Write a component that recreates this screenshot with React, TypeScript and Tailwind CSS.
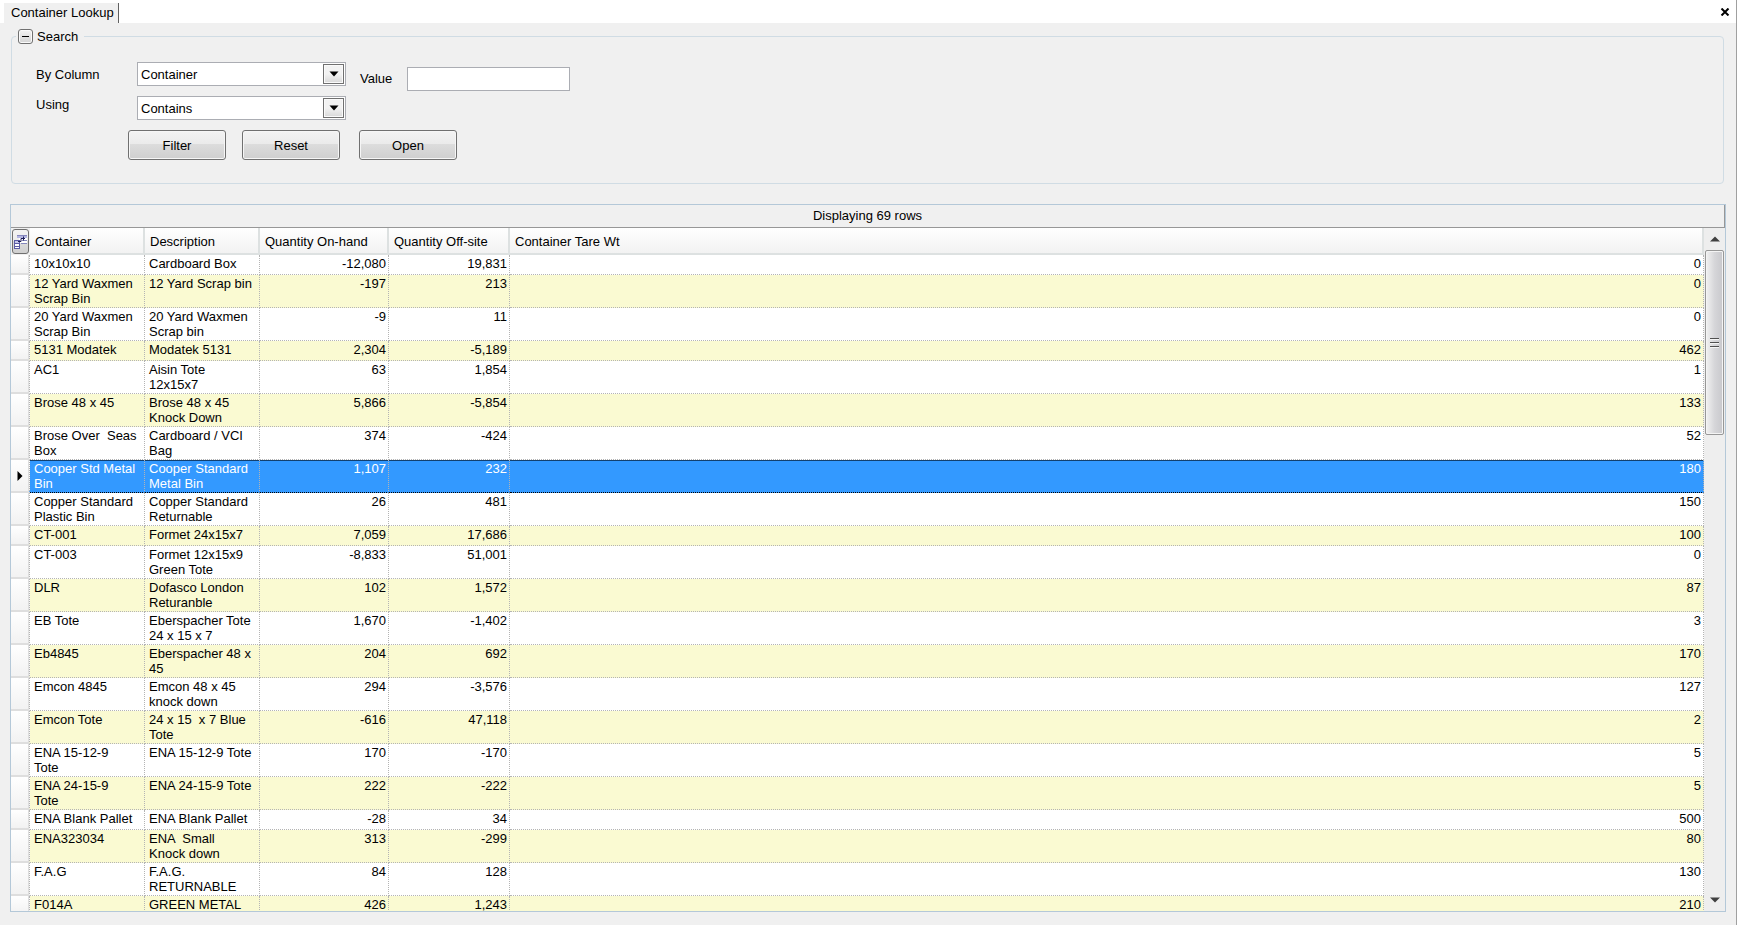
import React, { useState } from 'react';
import { clsx } from 'clsx';

interface ContainerRow {
  container: string;
  description: string;
  onHand: number;
  offSite: number;
  tare: number;
}

const rows: ContainerRow[] = [
  { container: '10x10x10', description: 'Cardboard Box', onHand: -12080, offSite: 19831, tare: 0 },
  { container: '12 Yard Waxmen\nScrap Bin', description: '12 Yard Scrap bin', onHand: -197, offSite: 213, tare: 0 },
  { container: '20 Yard Waxmen\nScrap Bin', description: '20 Yard Waxmen\nScrap bin', onHand: -9, offSite: 11, tare: 0 },
  { container: '5131 Modatek', description: 'Modatek 5131', onHand: 2304, offSite: -5189, tare: 462 },
  { container: 'AC1', description: 'Aisin Tote\n12x15x7', onHand: 63, offSite: 1854, tare: 1 },
  { container: 'Brose 48 x 45', description: 'Brose 48 x 45\nKnock Down', onHand: 5866, offSite: -5854, tare: 133 },
  { container: 'Brose Over  Seas\nBox', description: 'Cardboard / VCI\nBag', onHand: 374, offSite: -424, tare: 52 },
  { container: 'Cooper Std Metal\nBin', description: 'Cooper Standard\nMetal Bin', onHand: 1107, offSite: 232, tare: 180 },
  { container: 'Copper Standard\nPlastic Bin', description: 'Copper Standard\nReturnable', onHand: 26, offSite: 481, tare: 150 },
  { container: 'CT-001', description: 'Formet 24x15x7', onHand: 7059, offSite: 17686, tare: 100 },
  { container: 'CT-003', description: 'Formet 12x15x9\nGreen Tote', onHand: -8833, offSite: 51001, tare: 0 },
  { container: 'DLR', description: 'Dofasco London\nReturanble', onHand: 102, offSite: 1572, tare: 87 },
  { container: 'EB Tote', description: 'Eberspacher Tote\n24 x 15 x 7', onHand: 1670, offSite: -1402, tare: 3 },
  { container: 'Eb4845', description: 'Eberspacher 48 x\n45', onHand: 204, offSite: 692, tare: 170 },
  { container: 'Emcon 4845', description: 'Emcon 48 x 45\nknock down', onHand: 294, offSite: -3576, tare: 127 },
  { container: 'Emcon Tote', description: '24 x 15  x 7 Blue\nTote', onHand: -616, offSite: 47118, tare: 2 },
  { container: 'ENA 15-12-9\nTote', description: 'ENA 15-12-9 Tote', onHand: 170, offSite: -170, tare: 5 },
  { container: 'ENA 24-15-9\nTote', description: 'ENA 24-15-9 Tote', onHand: 222, offSite: -222, tare: 5 },
  { container: 'ENA Blank Pallet', description: 'ENA Blank Pallet', onHand: -28, offSite: 34, tare: 500 },
  { container: 'ENA323034', description: 'ENA  Small\nKnock down', onHand: 313, offSite: -299, tare: 80 },
  { container: 'F.A.G', description: 'F.A.G.\nRETURNABLE', onHand: 84, offSite: 128, tare: 130 },
  { container: 'F014A', description: 'GREEN METAL', onHand: 426, offSite: 1243, tare: 210 },
];

const headers = ['Container', 'Description', 'Quantity On-hand', 'Quantity Off-site', 'Container Tare Wt'];

const SelectBox = ({ id, options }: { id: string; options: string[] }) => (
  <div className="relative h-6 w-[209px]">
    <select
      id={id}
      className="h-full w-full appearance-none rounded-none border border-[#abadb3] bg-white pl-[3px] pr-6 text-black outline-none"
    >
      {options.map((o) => (
        <option key={o}>{o}</option>
      ))}
    </select>
    <span className="pointer-events-none absolute inset-y-[2px] right-[2px] flex w-[21px] items-center justify-center border border-[#707070] bg-linear-to-b from-[#f2f2f2] from-50% to-[#d8d8d8] shadow-[inset_0_0_0_1px_#fafafa]">
      <svg width="10" height="6" viewBox="0 0 10 6" aria-hidden="true">
        <path d="M0.5 0.5h9L5 5.5z" fill="#000" />
      </svg>
    </span>
  </div>
);

const PushButton = ({ children }: { children: React.ReactNode }) => (
  <button
    type="button"
    className="h-[30px] w-[98px] rounded-[3px] border border-[#707070] bg-[linear-gradient(#f3f3f3,#ebebeb_45%,#dddddd_45%,#cfcfcf)] text-center shadow-[inset_0_0_0_1px_#f6f6f6]"
  >
    {children}
  </button>
);

const SearchPanel = () => {
  const [open, setOpen] = useState(true);

  return (
    <fieldset className="ml-[11px] mr-3 mt-[5px] shrink-0 rounded border border-[#d0dce4] pl-6">
      <legend className="-ml-5 flex h-4 items-center gap-1 pl-[2px] pr-[6px]">
        <button
          type="button"
          aria-label="Toggle search"
          onClick={() => setOpen(!open)}
          className="flex size-[15px] items-center justify-center rounded-[3px] border border-[#707070] bg-linear-to-b from-[#f4f4f4] to-[#d4d4d4] shadow-[inset_0_0_0_1px_#fafafa]"
        >
          <span className="h-px w-[7px] bg-black" />
        </button>
        Search
      </legend>

      {open && (
        <div className="h-[139px] pt-[18px]">
          <div className="flex items-start">
            <div className="flex w-[101px] flex-col gap-[6px]">
              <label htmlFor="by-column" className="h-6 leading-[26px]">By Column</label>
              <label htmlFor="using" className="h-6 leading-[26px]">Using</label>
            </div>
            <div className="flex flex-col gap-[10px]">
              <SelectBox id="by-column" options={['Container', 'Description']} />
              <SelectBox id="using" options={['Contains', 'Equals', 'Starts With']} />
            </div>
            <div className="ml-[14px] mt-1 flex items-center">
              <label htmlFor="value" className="w-[47px] leading-[26px]">Value</label>
              <input id="value" type="text" className="h-6 w-[163px] border border-[#abadb3] bg-white px-1 outline-none" />
            </div>
          </div>
          <div className="ml-[92px] mt-[10px] flex gap-4">
            <PushButton>Filter</PushButton>
            <PushButton>Reset</PushButton>
            <div className="pl-[3px]">
              <PushButton>Open</PushButton>
            </div>
          </div>
        </div>
      )}
    </fieldset>
  );
};

const ColumnChooserIcon = () => (
  <svg width="15" height="16" viewBox="0 0 15 16" aria-hidden="true">
    <path d="M4 1h10v3H4z" fill="#b4b6e2" />
    <path d="M6 4h8v5H6z" fill="#fff" />
    <path d="M4 1.500h10M9 6.500h5M8 9.500h6" stroke="#8587bd" fill="none" />
    <path d="M1 6h6v9H1z" fill="#fff" />
    <path d="M1 6h6v3H1z" fill="#c6c8ea" />
    <path d="M1 6.500h6M1 9.500h6M1 12.500h6M1.500 6v9M6.500 8v7M1 14.500h6" stroke="#5c5ea6" fill="none" />
    <path d="M5 7.500h3V4.500h4M10.500 2.500v4" stroke="#1c1c58" fill="none" />
  </svg>
);

const ScrollBar = () => (
  <div className="flex w-[21px] shrink-0 flex-col items-center bg-[#eeeeee]" aria-hidden="true">
    <div className="flex h-[22px] items-center">
      <svg width="10" height="6" viewBox="0 0 10 6">
        <path d="M0 5.500h10L5 0.500z" fill="#404040" />
      </svg>
    </div>
    <div className="flex h-[185px] w-[19px] flex-col items-center justify-center gap-[3px] rounded-[2px] border border-[#979797] bg-linear-to-r from-[#f2f2f2] via-[#d6d6d9] to-[#c8c8cc] shadow-[inset_0_0_0_1px_#f4f4f4]">
      <span className="h-px w-[9px] bg-[#505050] shadow-[0_1px_0_#f4f4f4]" />
      <span className="h-px w-[9px] bg-[#505050] shadow-[0_1px_0_#f4f4f4]" />
      <span className="h-px w-[9px] bg-[#505050] shadow-[0_1px_0_#f4f4f4]" />
    </div>
    <div className="mt-auto flex h-[22px] items-center">
      <svg width="10" height="6" viewBox="0 0 10 6">
        <path d="M0 0.500h10L5 5.500z" fill="#404040" />
      </svg>
    </div>
  </div>
);

const ContainerGrid = () => {
  const [selected, setSelected] = useState(7);

  return (
    <section className="mb-[13px] ml-[10px] mr-[10px] mt-5 flex min-h-0 flex-1 flex-col border border-[#b4c8d8]">
      <div className="h-[23px] shrink-0 border-b border-r border-[#979797] text-center leading-[22px]">
        Displaying 69 rows
      </div>
      <div className="flex min-h-0 flex-1">
        <div className="min-w-0 flex-1 overflow-hidden bg-white">
          <table className="w-full table-fixed border-separate border-spacing-0">
            <colgroup>
              <col className="w-[19px]" />
              <col className="w-[115px]" />
              <col className="w-[115px]" />
              <col className="w-[129px]" />
              <col className="w-[121px]" />
              <col />
            </colgroup>
            <thead>
              <tr className="h-[27px]">
                <th className="bg-[#f0f0f0] p-0">
                  <button
                    type="button"
                    aria-label="Choose columns"
                    className="mx-auto flex h-[25px] w-[17px] items-center justify-center rounded-[3px] border border-[#707070] bg-[linear-gradient(#f3f3f3,#ebebeb_50%,#dddddd_50%,#cfcfcf)]"
                  >
                    <ColumnChooserIcon />
                  </button>
                </th>
                {headers.map((h) => (
                  <th
                    key={h}
                    className="border-b-2 border-r-2 border-[#dde1e1] bg-linear-to-b from-white to-[#f2f2f2] p-0 pl-[5px] pt-[2px] text-left font-normal"
                  >
                    {h}
                  </th>
                ))}
              </tr>
            </thead>
            <tbody>
              {rows.map((row, i) => {
                const active = i === selected;
                const cell = clsx(
                  'border-b border-r border-dotted border-[#b4b4b4] pt-px pb-px align-top leading-[15px] whitespace-pre',
                  active && 'border-b-black shadow-[inset_0_1px_0_#12406f]'
                );
                return (
                  <tr
                    key={row.container}
                    onClick={() => setSelected(i)}
                    className={clsx('h-5', active ? 'bg-[#3399ff] text-white' : i % 2 ? 'bg-[#fafad2]' : 'bg-white')}
                  >
                    <td className="border-b-2 border-r border-b-[#dedede] border-r-[#b4b4b4] [border-right-style:dotted] bg-linear-to-b from-white to-[#f2f2f2] p-0 align-middle shadow-[inset_-1px_0_0_#dedede]">
                      {active && (
                        <svg className="ml-[6px] block" width="6" height="10" viewBox="0 0 6 10" aria-hidden="true">
                          <path d="M0.500 0L5.500 5L0.500 10z" fill="#000" />
                        </svg>
                      )}
                    </td>
                    <td className={clsx(cell, 'pl-1')}>{row.container}</td>
                    <td className={clsx(cell, 'pl-1')}>{row.description}</td>
                    <td className={clsx(cell, 'pr-[2px] text-right')}>{row.onHand.toLocaleString('en-US')}</td>
                    <td className={clsx(cell, 'pr-[2px] text-right')}>{row.offSite.toLocaleString('en-US')}</td>
                    <td className={clsx(cell, 'pr-[2px] text-right')}>{row.tare}</td>
                  </tr>
                );
              })}
            </tbody>
          </table>
        </div>
        <ScrollBar />
      </div>
    </section>
  );
};

export default function App() {
  return (
    <div className="flex h-screen flex-col overflow-hidden border-r border-[#a0a0a0] bg-[#f0f0f0] font-['Liberation_Sans',Arial,sans-serif] text-[13px] leading-[15px] text-black">
      <header className="flex h-[23px] shrink-0 items-end justify-between bg-white pl-1 pr-[6px]">
        <div className="h-5 border-r border-[#606060] bg-[#f0f0f0] pl-[7px] pr-1 leading-[20px]">Container Lookup</div>
        <button type="button" aria-label="Close" className="mb-[7px]">
          <svg width="10" height="8" viewBox="0 0 10 8" aria-hidden="true">
            <path d="M1.500 0.500L8.500 7.500M8.500 0.500L1.500 7.500" stroke="#000" strokeWidth="2" />
          </svg>
        </button>
      </header>
      <SearchPanel />
      <ContainerGrid />
    </div>
  );
}
